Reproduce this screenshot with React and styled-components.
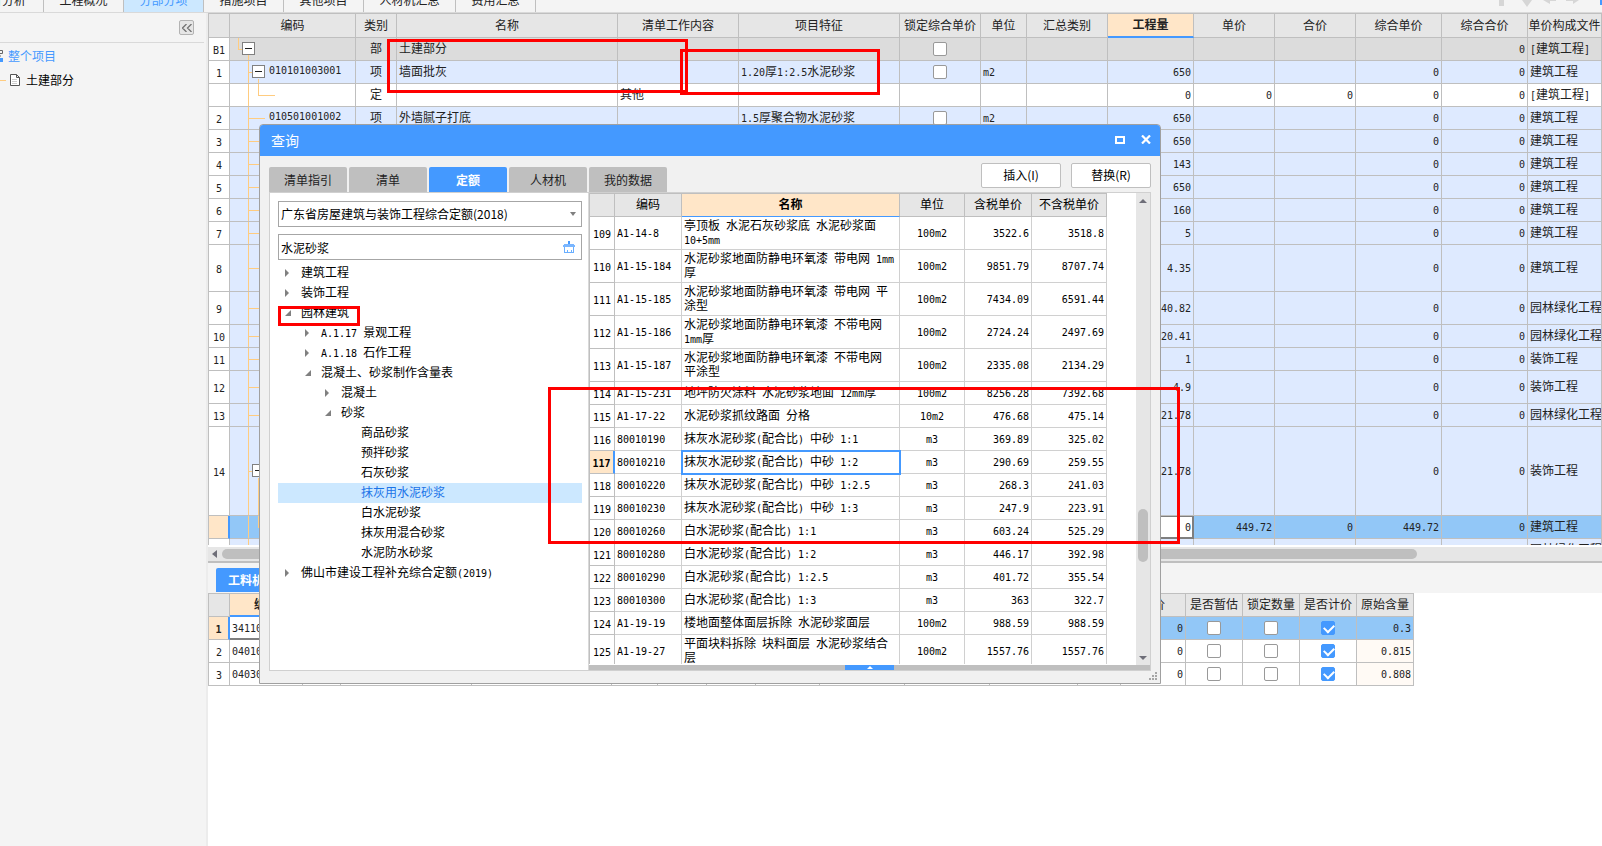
import React from "react";
import styled, { createGlobalStyle, css } from "styled-components";

const cjk = '"Noto Sans CJK SC", sans-serif';
const mono = '"DejaVu Sans Mono", monospace';

const PROJECT_TABS = [
  { label: "造价分析", width: 44 },
  { label: "工程概况", width: 80 },
  { label: "分部分项", width: 80, active: true },
  { label: "措施项目", width: 80 },
  { label: "其他项目", width: 80 },
  { label: "人材机汇总", width: 92 },
  { label: "费用汇总", width: 80 },
];

const BILL_COLUMNS = [
  { width: 21 },
  { label: "编码", width: 126 },
  { label: "类别", width: 41 },
  { label: "名称", width: 221 },
  { label: "清单工作内容", width: 121 },
  { label: "项目特征", width: 161 },
  { label: "锁定综合单价", width: 81 },
  { label: "单位", width: 46 },
  { label: "汇总类别", width: 81 },
  { label: "工程量", width: 86, active: true },
  { label: "单价", width: 81 },
  { label: "合价", width: 81 },
  { label: "综合单价", width: 86 },
  { label: "综合合价", width: 86 },
  { label: "单价构成文件" },
];

const BILL_ROWS = [
  { no: "B1", guide: "root", type: "部", name: "土建部分", lock: true, sumTotal: "0", file: "[建筑工程]", tone: "section" },
  { no: "1", guide: "open", code: "010101003001", type: "项", name: "墙面批灰", feature: "1.20厚1:2.5水泥砂浆", lock: true, unit: "m2", qty: "650", sumPrice: "0", sumTotal: "0", file: "建筑工程" },
  { no: "", guide: "child", type: "定", work: "其他", qty: "0", price: "0", total: "0", sumPrice: "0", sumTotal: "0", file: "[建筑工程]", tone: "plain" },
  { no: "2", code: "010501001002", type: "项", name: "外墙腻子打底", feature: "1.5厚聚合物水泥砂浆", lock: true, unit: "m2", qty: "650", sumPrice: "0", sumTotal: "0", file: "建筑工程" },
  { no: "3", qty: "650", sumPrice: "0", sumTotal: "0", file: "建筑工程" },
  { no: "4", qty: "143", sumPrice: "0", sumTotal: "0", file: "建筑工程" },
  { no: "5", qty: "650", sumPrice: "0", sumTotal: "0", file: "建筑工程" },
  { no: "6", qty: "160", sumPrice: "0", sumTotal: "0", file: "建筑工程" },
  { no: "7", qty: "5", sumPrice: "0", sumTotal: "0", file: "建筑工程" },
  { no: "8", qty: "4.35", sumPrice: "0", sumTotal: "0", file: "建筑工程", height: 47 },
  { no: "9", qty: "40.82", sumPrice: "0", sumTotal: "0", file: "园林绿化工程", height: 33 },
  { no: "10", qty: "20.41", sumPrice: "0", sumTotal: "0", file: "园林绿化工程" },
  { no: "11", qty: "1", sumPrice: "0", sumTotal: "0", file: "装饰工程" },
  { no: "12", qty: "4.9", sumPrice: "0", sumTotal: "0", file: "装饰工程", height: 33 },
  { no: "13", qty: "21.78", sumPrice: "0", sumTotal: "0", file: "园林绿化工程" },
  { no: "14", guide: "open", qty: "21.78", sumPrice: "0", sumTotal: "0", file: "装饰工程", height: 89 },
  { no: "", guide: "child", qty: "0", price: "449.72", total: "0", sumPrice: "449.72", sumTotal: "0", file: "建筑工程", tone: "selected" },
  { no: "", file: "园林绿化工程" },
];

const DETAIL_COLUMNS = [
  { width: 21 },
  { label: "编码", width: 73, active: true },
  { width: 38 },
  { width: 131 },
  { width: 140 },
  { width: 46 },
  { width: 49 },
  { width: 49 },
  { width: 64 },
  { width: 85 },
  { width: 85 },
  { width: 88 },
  { width: 43 },
  { label: "合价", width: 65 },
  { label: "是否暂估", width: 57 },
  { label: "锁定数量", width: 57 },
  { label: "是否计价", width: 57 },
  { label: "原始含量", width: 57 },
];

const DETAIL_ROWS = [
  { no: "1", code: "34110", total: "0", origin: "0.3", selected: true },
  { no: "2", code: "04010", total: "0", origin: "0.815" },
  { no: "3", code: "04030", total: "0", origin: "0.808" },
];

const DIALOG_TABS = ["清单指引", "清单", "定额", "人材机", "我的数据"];

const TREE = [
  { label: "建筑工程", level: 0, state: "closed" },
  { label: "装饰工程", level: 0, state: "closed" },
  { label: "园林建筑", level: 0, state: "open" },
  { label: "A.1.17 景观工程", level: 1, state: "closed" },
  { label: "A.1.18 石作工程", level: 1, state: "closed" },
  { label: "混凝土、砂浆制作含量表", level: 1, state: "open" },
  { label: "混凝土", level: 2, state: "closed" },
  { label: "砂浆", level: 2, state: "open" },
  { label: "商品砂浆", level: 3 },
  { label: "预拌砂浆", level: 3 },
  { label: "石灰砂浆", level: 3 },
  { label: "抹灰用水泥砂浆", level: 3, selected: true },
  { label: "白水泥砂浆", level: 3 },
  { label: "抹灰用混合砂浆", level: 3 },
  { label: "水泥防水砂浆", level: 3 },
  { label: "佛山市建设工程补充综合定额(2019)", level: 0, state: "closed" },
];

const QUOTA_COLUMNS = [
  { width: 25 },
  { label: "编码", width: 67 },
  { label: "名称", width: 218, active: true },
  { label: "单位", width: 65 },
  { label: "含税单价", width: 67 },
  { label: "不含税单价", width: 75 },
];

const QUOTA_ROWS = [
  ["109", "A1-14-8", "亭顶板 水泥石灰砂浆底 水泥砂浆面 10+5mm", "100m2", "3522.6", "3518.8", 33],
  ["110", "A1-15-184", "水泥砂浆地面防静电环氧漆 带电网 1mm厚", "100m2", "9851.79", "8707.74", 33],
  ["111", "A1-15-185", "水泥砂浆地面防静电环氧漆 带电网 平涂型", "100m2", "7434.09", "6591.44", 33],
  ["112", "A1-15-186", "水泥砂浆地面防静电环氧漆 不带电网 1mm厚", "100m2", "2724.24", "2497.69", 33],
  ["113", "A1-15-187", "水泥砂浆地面防静电环氧漆 不带电网 平涂型", "100m2", "2335.08", "2134.29", 33],
  ["114", "A1-15-231", "地坪防火涂料 水泥砂浆地面 12mm厚", "100m2", "8256.28", "7392.68"],
  ["115", "A1-17-22", "水泥砂浆抓纹路面 分格", "10m2", "476.68", "475.14"],
  ["116", "80010190", "抹灰水泥砂浆(配合比) 中砂 1:1", "m3", "369.89", "325.02"],
  ["117", "80010210", "抹灰水泥砂浆(配合比) 中砂 1:2", "m3", "290.69", "259.55"],
  ["118", "80010220", "抹灰水泥砂浆(配合比) 中砂 1:2.5", "m3", "268.3", "241.03"],
  ["119", "80010230", "抹灰水泥砂浆(配合比) 中砂 1:3", "m3", "247.9", "223.91"],
  ["120", "80010260", "白水泥砂浆(配合比) 1:1", "m3", "603.24", "525.29"],
  ["121", "80010280", "白水泥砂浆(配合比) 1:2", "m3", "446.17", "392.98"],
  ["122", "80010290", "白水泥砂浆(配合比) 1:2.5", "m3", "401.72", "355.54"],
  ["123", "80010300", "白水泥砂浆(配合比) 1:3", "m3", "363", "322.7"],
  ["124", "A1-19-19", "楼地面整体面层拆除 水泥砂浆面层", "100m2", "988.59", "988.59"],
  ["125", "A1-19-27", "平面块料拆除 块料面层 水泥砂浆结合层", "100m2", "1557.76", "1557.76", 33],
];

// Latin runs are set in a half-width face so that two of them fill one Chinese character
function Txt({ children }) {
  const parts = String(children || "").match(/[\x20-\x7e]+|[^\x20-\x7e]+/g) || [];
  return parts.map((part, i) =>
    /^[\x20-\x7e]/.test(part) ? <Half key={i}>{part}</Half> : part
  );
}

function HeadRow({ columns, tall, thin }) {
  return (
    <thead>
      <tr>
        {columns.map((col, i) => (
          <HeadCell key={i} scope="col" $active={col.active} $tall={tall} $thin={thin}>{col.label}</HeadCell>
        ))}
      </tr>
    </thead>
  );
}

function Columns({ columns }) {
  return (
    <colgroup>
      {columns.map((col, i) => <Col key={i} $width={col.width} />)}
    </colgroup>
  );
}

function BillGrid() {
  return (
    <BillPane>
      <Grid>
        <Columns columns={BILL_COLUMNS} />
        <HeadRow columns={BILL_COLUMNS} tall />
        <tbody>
          {BILL_ROWS.map((row, i) => (
            <BillRow key={i} $tone={row.tone} $height={row.height}>
              <NumberCell $active={row.tone === "selected"}><Txt>{row.no}</Txt></NumberCell>
              <GuideCell $guide={row.guide}>
                <GuideContent $guide={row.guide}>
                  {(row.guide === "root" || row.guide === "open") && (
                    <FoldButton aria-label="折叠" />
                  )}
                  <Txt>{row.code}</Txt>
                </GuideContent>
              </GuideCell>
              <Cell $align="center">{row.type}</Cell>
              <Cell>{row.name}</Cell>
              <Cell>{row.work}</Cell>
              <Cell><Txt>{row.feature}</Txt></Cell>
              <Cell $align="center">
                {row.lock && <Check type="checkbox" aria-label="锁定综合单价" />}
              </Cell>
              <Cell><Txt>{row.unit}</Txt></Cell>
              <Cell />
              <Cell $align="right" $editing={row.tone === "selected"}><Txt>{row.qty}</Txt></Cell>
              <Cell $align="right"><Txt>{row.price}</Txt></Cell>
              <Cell $align="right"><Txt>{row.total}</Txt></Cell>
              <Cell $align="right"><Txt>{row.sumPrice}</Txt></Cell>
              <Cell $align="right"><Txt>{row.sumTotal}</Txt></Cell>
              <FileCell><Txt>{row.file}</Txt></FileCell>
            </BillRow>
          ))}
        </tbody>
      </Grid>
    </BillPane>
  );
}

function DetailGrid() {
  return (
    <Grid $fit>
      <Columns columns={DETAIL_COLUMNS} />
      <HeadRow columns={DETAIL_COLUMNS} />
      <tbody>
        {DETAIL_ROWS.map((row) => (
          <BillRow key={row.no} $tone={row.selected ? "selected" : "plain"}>
            <NumberCell $active={row.selected}><Txt>{row.no}</Txt></NumberCell>
            <Cell $current={row.selected}><Txt>{row.code}</Txt></Cell>
            {DETAIL_COLUMNS.slice(2, 13).map((col, i) => <Cell key={i} />)}
            <Cell $align="right"><Txt>{row.total}</Txt></Cell>
            <Cell $align="center"><Check type="checkbox" aria-label="是否暂估" /></Cell>
            <Cell $align="center"><Check type="checkbox" aria-label="锁定数量" /></Cell>
            <Cell $align="center"><Check type="checkbox" aria-label="是否计价" defaultChecked /></Cell>
            <Cell $align="right" $readonly={!row.selected}><Txt>{row.origin}</Txt></Cell>
          </BillRow>
        ))}
      </tbody>
    </Grid>
  );
}

function QuotaTree() {
  return (
    <TreePane>
      <SelectBox>
        <LibrarySelect aria-label="定额库">
          <option>广东省房屋建筑与装饰工程综合定额(2018)</option>
        </LibrarySelect>
        <svg width="6" height="4" viewBox="0 0 6 4"><path d="M0 0h6L3 4z" fill="#7f7f7f" /></svg>
      </SelectBox>
      <SearchBox>
        <SearchInput aria-label="搜索" defaultValue="水泥砂浆" />
        <ClearButton aria-label="清空">
          <svg width="12" height="13" viewBox="0 0 12 13">
            <path d="M5 0h2v3H5z" fill="#4499ff" />
            <path d="M1 3h10v1h1v2H0V4h1z" fill="#7ab6ff" />
            <path d="M1 6h1v6H1zM10 6h1v6h-1zM1 11h10v1H1zM4 9h1v2H4zM8 9h1v2H8z" fill="#6aafff" />
          </svg>
        </ClearButton>
      </SearchBox>
      <TreeList>
        {TREE.map((node) => (
          <TreeItem key={node.label} $level={node.level} $selected={node.selected}>
            <Arrow width="7" height="8" viewBox="0 0 7 8">
              {node.state === "closed" && <path d="M0 0l4 4-4 4z" />}
              {node.state === "open" && <path d="M6 1v6H0z" />}
            </Arrow>
            <TreeLabel><Txt>{node.label}</Txt></TreeLabel>
          </TreeItem>
        ))}
      </TreeList>
    </TreePane>
  );
}

function QuotaGrid() {
  return (
    <QuotaPane>
      <QuotaBody>
        <QuotaScroll>
          <Grid $fit $light>
            <Columns columns={QUOTA_COLUMNS} />
            <HeadRow columns={QUOTA_COLUMNS} thin />
            <tbody>
              {QUOTA_ROWS.map(([no, code, name, unit, taxed, untaxed, height]) => (
                <BillRow key={no} $tone="plain" $height={height}>
                  <NumberCell $active={no === "117"}><Txt>{no}</Txt></NumberCell>
                  <Cell><Txt>{code}</Txt></Cell>
                  <Cell $picked={no === "117"}><Txt>{name}</Txt></Cell>
                  <Cell $align="center"><Txt>{unit}</Txt></Cell>
                  <Cell $align="right"><Txt>{taxed}</Txt></Cell>
                  <Cell $align="right"><Txt>{untaxed}</Txt></Cell>
                </BillRow>
              ))}
            </tbody>
          </Grid>
        </QuotaScroll>
        <VerticalBar>
          <svg width="8" height="4" viewBox="0 0 8 4"><path d="M4 0l4 4H0z" fill="#6e6e78" /></svg>
          <VerticalTrack><VerticalThumb /></VerticalTrack>
          <svg width="8" height="4" viewBox="0 0 8 4"><path d="M0 0h8L4 4z" fill="#6e6e78" /></svg>
        </VerticalBar>
      </QuotaBody>
      <Splitter>
        <SplitterButton aria-label="展开">
          <svg width="6" height="3" viewBox="0 0 6 3"><path d="M3 0l3 3H0z" fill="#fff" /></svg>
        </SplitterButton>
      </Splitter>
    </QuotaPane>
  );
}

function QueryDialog() {
  return (
    <Dialog role="dialog" aria-labelledby="dialog-title">
      <TitleBar>
        <Title id="dialog-title">查询</Title>
        <TitleButton aria-label="最大化">
          <svg width="10" height="8" viewBox="0 0 10 8"><path d="M1 1h8v6H1z" fill="none" stroke="#fff" strokeWidth="2" /></svg>
        </TitleButton>
        <TitleButton aria-label="关闭">
          <svg width="10" height="9" viewBox="0 0 10 9"><path d="M1 .5l8 8M9 .5l-8 8" stroke="#fff" strokeWidth="2.2" /></svg>
        </TitleButton>
      </TitleBar>
      <DialogTools>
        <TabStrip>
          {DIALOG_TABS.map((label) => (
            <DialogTab key={label} $active={label === "定额"}>{label}</DialogTab>
          ))}
        </TabStrip>
        <ActionBar>
          <ActionButton>插入(I)</ActionButton>
          <ActionButton>替换(R)</ActionButton>
        </ActionBar>
      </DialogTools>
      <DialogPanel>
        <QuotaTree />
        <QuotaGrid />
      </DialogPanel>
      <Grip width="8" height="8" viewBox="0 0 8 8" fill="#a6a6a6">
        <path d="M6 0h2v2H6zM6 3h2v2H6zM6 6h2v2H6zM3 3h2v2H3zM3 6h2v2H3zM0 6h2v2H0z" />
      </Grip>
    </Dialog>
  );
}

function App() {
  return (
    <Page>
      <GlobalStyle />
      <TopBar>
        <ProjectTabs>
          {PROJECT_TABS.map((tab) => (
            <ProjectTab key={tab.label} href="#" $width={tab.width} $active={tab.active}>
              {tab.label}
            </ProjectTab>
          ))}
        </ProjectTabs>
        <svg width="108" height="12" viewBox="0 0 108 12">
          <path d="M5 0h5v6H5zM28 0h10l-5 7zM49 0h13v1h-6v3zM72 0h13l-6 4V1h-7z" fill="#d6d6d6" />
          <path d="M106 0h2v5h-2z" fill="#4499ff" />
        </svg>
      </TopBar>
      <Workspace>
        <Sidebar>
          <SidebarHead>
            <CollapseButton aria-label="收起">
              <svg width="10" height="8" viewBox="0 0 10 8" fill="none" stroke="#737373" strokeWidth="1.3">
                <path d="M4.500 0l-4 4 4 4M9.500 0l-4 4 4 4" />
              </svg>
            </CollapseButton>
          </SidebarHead>
          <ProjectLink href="#" $active>
            <svg width="4" height="14" viewBox="0 0 4 14">
              <path d="M0 1.500h2.500v3H0M0 7h1" fill="none" stroke="#666" />
              <path d="M0 9h3v4H0z" fill="#4499ff" />
            </svg>
            整个项目
          </ProjectLink>
          <ProjectLink href="#">
            <svg width="22" height="14" viewBox="0 0 22 14" fill="none">
              <path d="M0 7.500h6" stroke="#ffcc80" />
              <path d="M10.500 1.500h6l3 3v8h-9zM16.500 1.500v3h3" fill="#fff" stroke="#555" />
              <path d="M12 6.500h5M12 8.500h5M12 10.500h5" stroke="#ccc" />
            </svg>
            土建部分
          </ProjectLink>
        </Sidebar>
        <Main>
          <BillGrid />
          <HorizontalBar>
            <svg width="5" height="8" viewBox="0 0 5 8"><path d="M5 0v8L0 4z" fill="#6e6e78" /></svg>
            <HorizontalTrack><HorizontalThumb /></HorizontalTrack>
          </HorizontalBar>
          <DetailTabs>
            <DetailTab>工料机显示</DetailTab>
          </DetailTabs>
          <DetailGrid />
        </Main>
      </Workspace>
      <QueryDialog />
      <Marker $x={387} $y={39} $w={301} $h={54} />
      <Marker $x={680} $y={49} $w={200} $h={46} />
      <Marker $x={278} $y={306} $w={82} $h={20} />
      <Marker $x={548} $y={387} $w={632} $h={157} />
    </Page>
  );
}

export default App;

const GlobalStyle = createGlobalStyle`
  * {
    box-sizing: border-box;
  }

  body {
    margin: 0;
    overflow: hidden;
    font-family: ${cjk};
    font-size: 12px;
    line-height: 14px;
    color: #222;
  }

  button, input, select {
    font: inherit;
    color: inherit;
    margin: 0;
    padding: 0;
    border: 0;
    background: none;
  }

  svg {
    display: block;
    flex: none;
  }
`;

const Half = styled.span`
  font-family: ${mono};
  font-size: 10px;
  line-height: 10px;
`;

const Page = styled.div`
  position: relative;
  display: flex;
  flex-direction: column;
  height: 100vh;
  overflow: hidden;
  background: #fff;
`;

const TopBar = styled.div`
  display: flex;
  justify-content: space-between;
  height: 13px;
  flex: none;
  overflow: hidden;
  background: #f4f4f4;
  border-bottom: 1px solid #d9d9d9;
`;

const ProjectTabs = styled.nav`
  display: flex;
  align-items: flex-end;
`;

const ProjectTab = styled.a`
  display: flex;
  justify-content: center;
  width: ${(p) => p.$width}px;
  height: 26px;
  line-height: 28px;
  white-space: nowrap;
  ${(p) => p.$width === 44 && css`justify-content: flex-end; padding-right: 17px;`}
  border-right: 1px solid #bfbfbf;
  background: ${(p) => (p.$active ? "#cce8ff" : "transparent")};
  color: ${(p) => (p.$active ? "#4499ff" : "#222")};
  text-decoration: none;
`;

const Workspace = styled.div`
  display: flex;
  flex: 1;
  min-height: 0;
`;

const Sidebar = styled.aside`
  width: 208px;
  flex: none;
  background: #f4f4f4;
  border-right: 2px solid #ececec;
`;

const SidebarHead = styled.div`
  display: flex;
  justify-content: flex-end;
  align-items: center;
  height: 30px;
  margin-right: 2px;
  padding-right: 10px;
  border-bottom: 1px solid #d9d9d9;
`;

const CollapseButton = styled.button`
  display: flex;
  align-items: center;
  justify-content: center;
  width: 15px;
  height: 15px;
  border: 1px solid #b3b3b3;
  border-radius: 2px;
  background: #e6e6e6;
`;

const ProjectLink = styled.a`
  display: flex;
  align-items: center;
  gap: 4px;
  height: 24px;
  margin-top: ${(p) => (p.$active ? 1 : 0)}px;
  color: ${(p) => (p.$active ? "#4499ff" : "#000")};
  text-decoration: none;
`;

const Main = styled.main`
  display: flex;
  flex-direction: column;
  flex: 1;
  min-width: 0;
  overflow: hidden;
`;

const BillPane = styled.div`
  height: 532px;
  margin-bottom: 2px;
  flex: none;
  overflow: hidden;
`;

const Grid = styled.table`
  width: ${(p) => (p.$fit ? "1px" : "100%")};
  flex: none;
  table-layout: fixed;
  border-collapse: separate;
  border-spacing: 0;
  border-top: 1px solid #bfbfbf;
  border-left: 1px solid #bfbfbf;
  --line: ${(p) => (p.$light ? "#d0d0d0" : "#bfbfbf")};
`;

const Col = styled.col`
  width: ${(p) => (p.$width ? `${p.$width}px` : "auto")};
`;

const HeadCell = styled.th`
  height: ${(p) => (p.$tall ? 24 : 23)}px;
  padding: 0 0 2px;
  overflow: hidden;
  white-space: nowrap;
  font-weight: ${(p) => (p.$active ? "bold" : "normal")};
  background: ${(p) => (p.$active ? "#ffe6c8" : "#e6e6e6")};
  border-right: 1px solid #bfbfbf;
  border-bottom: 1px solid #bfbfbf;
  ${(p) => p.$active && css`
    border-bottom: ${p.$thin ? 1 : 2}px solid #4499ff;
  `}
`;

const tones = {
  section: "#dcdcdc",
  plain: "#fff",
  selected: "#92c7f7",
};

const BillRow = styled.tr`
  height: ${(p) => p.$height || 23}px;
  background: ${(p) => tones[p.$tone] || "#deeaff"};
`;

const Cell = styled.td`
  padding: 0 2px 2px;
  text-align: ${(p) => p.$align || "left"};
  border-right: 1px solid var(--line);
  border-bottom: 1px solid var(--line);
  ${(p) => p.$readonly && css`background: #fffaf5;`}
  ${(p) => p.$current && css`
    background: #fff;
    border-bottom: 2px solid #7f7f7f;
  `}
  ${(p) => p.$editing && css`
    background: #fff;
    box-shadow: inset 0 0 0 1px #7f7f7f;
    border-color: #7f7f7f;
  `}
  ${(p) => p.$picked && css`
    outline: 2px solid #4499ff;
    outline-offset: -1px;
  `}
`;

const FileCell = styled(Cell)`
  white-space: nowrap;
  overflow: hidden;
`;

const NumberCell = styled(Cell)`
  padding: 0;
  text-align: center;
  background: ${(p) => (p.$active ? "#ffe6c8" : "#fff")};
  font-weight: ${(p) => (p.$active ? "bold" : "normal")};
  border-color: #bfbfbf;
  ${(p) => p.$active && css`border-right: 2px solid #4499ff;`}
`;

const orange = "linear-gradient(#ffcc80, #ffcc80)";
const trunk = `${orange} 18px 0 / 1px 100%`;

const guides = {
  root: `${orange} 8px 0 / 1px 11px, ${orange} 8px 50% / 5px 1px, ${orange} 18px 100% / 1px 6px`,
  open: `${trunk}, ${orange} 18px 50% / 5px 1px, ${orange} 28px 100% / 1px calc(50% - 6px)`,
  child: `${trunk}, ${orange} 28px 0 / 1px 50%, ${orange} 28px 50% / 17px 1px`,
  leaf: `${trunk}, ${orange} 18px 50% / 17px 1px`,
};

const GuideCell = styled(Cell)`
  padding: 0 0 2px;
  background: ${(p) => guides[p.$guide || "leaf"]};
  background-repeat: no-repeat;
  background-origin: border-box;
`;

const GuideContent = styled.div`
  display: flex;
  align-items: center;
  gap: 4px;
  padding-left: ${(p) => ({ root: 12, open: 22 }[p.$guide] || 39)}px;
`;

const FoldButton = styled.button`
  display: flex;
  align-items: center;
  justify-content: center;
  width: 13px;
  height: 13px;
  border: 1px solid #808080;
  background: #fff;

  &::before {
    content: "";
    width: 7px;
    height: 1px;
    background: #222;
  }
`;

const Check = styled.input`
  appearance: none;
  display: block;
  width: 14px;
  height: 14px;
  margin: 2px auto 0;
  border: 1px solid #999;
  border-radius: 2px;
  background: #fff;

  &:checked {
    border-color: #4499ff;
    background: #4499ff;
  }

  &:checked::after {
    content: "";
    display: block;
    width: 8px;
    height: 5px;
    margin: 2px 0 0 2px;
    border-left: 2px solid #fff;
    border-bottom: 2px solid #fff;
    transform: rotate(-45deg);
  }
`;

const HorizontalBar = styled.div`
  display: flex;
  align-items: center;
  gap: 5px;
  height: 16px;
  flex: none;
  padding-left: 4px;
  background: #e6e6e6;
  border-bottom: 2px solid #bfbfbf;
`;

const HorizontalTrack = styled.div`
  flex: 1;
`;

const HorizontalThumb = styled.div`
  width: 86.6%;
  height: 10px;
  border-radius: 5px;
  background: #bfbfbf;
`;

const DetailTabs = styled.div`
  display: flex;
  align-items: flex-end;
  height: 30px;
  flex: none;
  padding: 0 0 1px 8px;
  background: #f4f4f4;
`;

const DetailTab = styled.button`
  height: 24px;
  padding: 0 12px;
  border-radius: 2px 2px 0 0;
  background: #4499ff;
  color: #fff;
  font-weight: bold;
`;

const Dialog = styled.section`
  position: absolute;
  left: 259px;
  top: 124px;
  display: flex;
  flex-direction: column;
  width: 902px;
  height: 560px;
  border: 1px solid #a0a0a0;
  border-radius: 4px 4px 0 0;
  background: #f1f1f1;
  color: #000;
`;

const TitleBar = styled.header`
  display: flex;
  align-items: center;
  gap: 16px;
  height: 31px;
  flex: none;
  padding: 0 9px 2px 11px;
  border-radius: 3px 3px 0 0;
  background: #4499ff;
`;

const Title = styled.h1`
  flex: 1;
  margin: 0;
  font-size: 14px;
  line-height: 20px;
  font-weight: normal;
  color: #fff;
`;

const TitleButton = styled.button`
  display: flex;
  align-items: center;
  height: 20px;
`;

const DialogTools = styled.div`
  display: flex;
  justify-content: space-between;
  height: 36px;
  flex: none;
  padding: 0 9px;
`;

const TabStrip = styled.div`
  display: flex;
  align-items: flex-end;
  gap: 2px;
`;

const DialogTab = styled.button`
  width: 78px;
  height: 25px;
  border-radius: 2px 2px 0 0;
  background: ${(p) => (p.$active ? "#4499ff" : "#bfbfbf")};
  color: ${(p) => (p.$active ? "#fff" : "#222")};
  font-weight: ${(p) => (p.$active ? "bold" : "normal")};
`;

const ActionBar = styled.div`
  display: flex;
  gap: 10px;
  padding-top: 7px;
`;

const ActionButton = styled.button`
  width: 80px;
  height: 25px;
  padding-bottom: 2px;
  border: 1px solid #bfbfbf;
  border-radius: 2px;
  background: #fff;
`;

const DialogPanel = styled.div`
  display: flex;
  flex: 1;
  min-height: 0;
  margin: 0 9px 12px;
  border: 1px solid #d0d0d0;
  background: #fff;
`;

const TreePane = styled.div`
  width: 319px;
  flex: none;
  padding: 8px 6px 0 8px;
  border-right: 1px solid #d9d9d9;
`;

const SelectBox = styled.label`
  display: flex;
  align-items: center;
  height: 26px;
  padding-right: 5px;
  border: 1px solid #a6a6a6;
`;

const LibrarySelect = styled.select`
  appearance: none;
  flex: 1;
  height: 24px;
  padding-left: 2px;
  outline: none;
`;

const SearchBox = styled.label`
  display: flex;
  align-items: center;
  height: 26px;
  margin: 7px 0 3px;
  padding-right: 6px;
  border: 1px solid #a6a6a6;
`;

const SearchInput = styled.input`
  flex: 1;
  min-width: 0;
  height: 24px;
  padding-left: 2px;
  outline: none;
`;

const ClearButton = styled.button`
  display: block;
`;

const TreeList = styled.ul`
  margin: 0;
  padding: 0;
  list-style: none;
`;

const TreeItem = styled.li`
  display: flex;
  align-items: center;
  gap: 9px;
  height: 20px;
  padding-left: ${(p) => 7 + p.$level * 20}px;
  background: ${(p) => (p.$selected ? "#cce8ff" : "transparent")};
  color: ${(p) => (p.$selected ? "#1a73e8" : "#000")};
`;

const TreeLabel = styled.span`
  padding-bottom: 2px;
`;

const Arrow = styled.svg`
  fill: #808080;
`;

const QuotaPane = styled.div`
  display: flex;
  flex-direction: column;
  flex: 1;
  min-width: 0;
`;

const QuotaBody = styled.div`
  display: flex;
  flex: 1;
  min-height: 0;
`;

const QuotaScroll = styled.div`
  flex: 1;
  min-width: 0;
  margin-bottom: 1px;
  overflow: hidden;
`;

const VerticalBar = styled.div`
  display: flex;
  flex-direction: column;
  align-items: center;
  width: 14px;
  padding: 6px 0 5px;
  background: #e6e6e6;
`;

const VerticalTrack = styled.div`
  display: flex;
  flex-direction: column;
  justify-content: flex-end;
  flex: 1;
  padding-bottom: 94px;
`;

const VerticalThumb = styled.div`
  width: 10px;
  height: 53px;
  border-radius: 5px;
  background: #bfbfbf;
`;

const Splitter = styled.div`
  display: flex;
  justify-content: center;
  height: 5px;
  flex: none;
  background: #bfbfbf;
`;

const SplitterButton = styled.button`
  display: flex;
  align-items: center;
  justify-content: center;
  width: 49px;
  height: 5px;
  background: #4499ff;
`;

const Grip = styled.svg`
  position: absolute;
  right: 3px;
  bottom: 3px;
`;

const Marker = styled.div`
  position: absolute;
  left: ${(p) => p.$x}px;
  top: ${(p) => p.$y}px;
  width: ${(p) => p.$w}px;
  height: ${(p) => p.$h}px;
  border: 3px solid #f00;
  pointer-events: none;
`;
